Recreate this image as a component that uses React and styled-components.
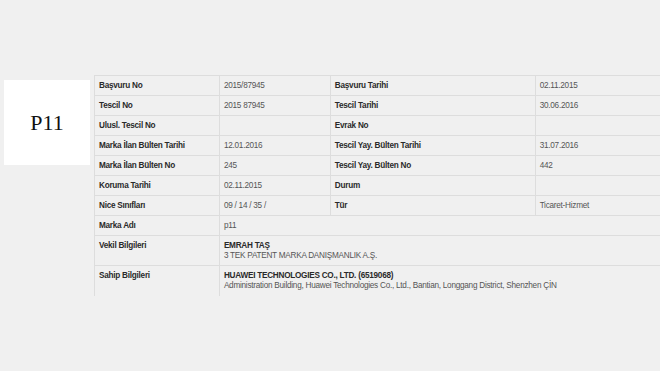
import React from "react";
import styled, { createGlobalStyle } from "styled-components";

const GlobalStyle = createGlobalStyle`
  html, body {
    margin: 0;
    padding: 0;
    background: #f0f0f0;
  }
  body {
    font-family: "Liberation Sans", Arial, sans-serif;
  }
`;

const Page = styled.div`
  display: flex;
  align-items: flex-start;
  gap: 4px;
  width: 660px;
  height: 371px;
  padding: 75px 0 0 4px;
  box-sizing: border-box;
  overflow: hidden;
`;

const Logo = styled.div`
  flex: 0 0 86px;
  height: 85px;
  margin-top: 5px;
  background: #fff;
  display: flex;
  align-items: center;
  justify-content: center;
  font-family: "Liberation Serif", "Times New Roman", serif;
  font-size: 22px;
  color: #111;
`;

const Table = styled.table`
  flex: 0 0 620px;
  border-collapse: collapse;
  table-layout: fixed;
  font-size: 8.2px;
  letter-spacing: -0.25px;
`;

const Row = styled.tr`
  height: ${(p) => (p.$tall ? "30px" : "20px")};
`;

const Label = styled.th`
  text-align: left;
  vertical-align: ${(p) => (p.$top ? "top" : "middle")};
  padding: ${(p) => (p.$top ? "5px 4px 0" : "0 4px")};
  font-weight: bold;
  color: #2a2a2a;
  border-top: 1px solid #dddddd;
  border-left: 1px solid #dddddd;
  white-space: nowrap;
`;

const Value = styled.td`
  vertical-align: ${(p) => (p.$top ? "top" : "middle")};
  padding: ${(p) => (p.$top ? "5px 4px 0" : "0 4px")};
  color: #555;
  border-top: 1px solid #dddddd;
  border-left: 1px solid #dddddd;
  white-space: nowrap;
  line-height: 10px;
`;

const Strong = styled.div`
  font-weight: bold;
  color: #2a2a2a;
`;

const pairs = [
  ["Başvuru No", "2015/87945", "Başvuru Tarihi", "02.11.2015"],
  ["Tescil No", "2015 87945", "Tescil Tarihi", "30.06.2016"],
  ["Ulusl. Tescil No", "", "Evrak No", ""],
  ["Marka İlan Bülten Tarihi", "12.01.2016", "Tescil Yay. Bülten Tarihi", "31.07.2016"],
  ["Marka İlan Bülten No", "245", "Tescil Yay. Bülten No", "442"],
  ["Koruma Tarihi", "02.11.2015", "Durum", ""],
  ["Nice Sınıfları", "09 / 14 / 35 /", "Tür", "Ticaret-Hizmet"],
];

export default function App() {
  return (
    <>
      <GlobalStyle />
      <Page>
        <Logo>P11</Logo>
        <Table>
          <colgroup>
            <col style={{ width: 125 }} />
            <col style={{ width: 111 }} />
            <col style={{ width: 205 }} />
            <col style={{ width: 179 }} />
          </colgroup>
          <tbody>
            {pairs.map((r) => (
              <Row key={r[0]}>
                <Label>{r[0]}</Label>
                <Value>{r[1]}</Value>
                <Label>{r[2]}</Label>
                <Value>{r[3]}</Value>
              </Row>
            ))}
            <Row>
              <Label>Marka Adı</Label>
              <Value colSpan={3}>p11</Value>
            </Row>
            <Row $tall>
              <Label $top>Vekil Bilgileri</Label>
              <Value $top colSpan={3}>
                <Strong>EMRAH TAŞ</Strong>
                3 TEK PATENT MARKA DANIŞMANLIK A.Ş.
              </Value>
            </Row>
            <Row $tall>
              <Label $top>Sahip Bilgileri</Label>
              <Value $top colSpan={3}>
                <Strong>HUAWEI TECHNOLOGIES CO., LTD. (6519068)</Strong>
                Administration Building, Huawei Technologies Co., Ltd., Bantian, Longgang District, Shenzhen ÇİN
              </Value>
            </Row>
          </tbody>
        </Table>
      </Page>
    </>
  );
}
